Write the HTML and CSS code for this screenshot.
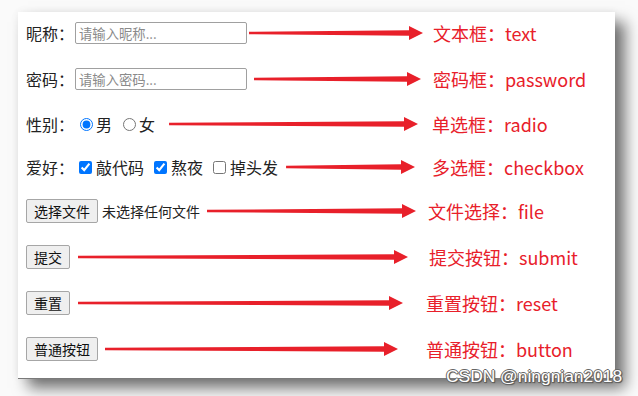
FILE: index.html
```html
<!DOCTYPE html>
<html lang="zh-CN">
<head>
  <meta charset="UTF-8">
  <meta name="viewport" content="width=device-width, initial-scale=1.0">
  <title>表单元素</title>
  <link rel="stylesheet" href="styles.css">
</head>
<body>
  <div class="card">
    <form class="demo-form" onsubmit="return false">
      <div class="row row-text">
        <div class="field">
          <span class="field-label">昵称：</span>
          <input type="text" class="text-input" placeholder="请输入昵称...">
        </div>
        <div class="arrow"><span class="shaft"></span><span class="head"></span></div>
        <div class="note">文本框：text</div>
      </div>

      <div class="row row-password">
        <div class="field">
          <span class="field-label">密码：</span>
          <input type="password" class="text-input" placeholder="请输入密码...">
        </div>
        <div class="arrow"><span class="shaft"></span><span class="head"></span></div>
        <div class="note">密码框：password</div>
      </div>

      <div class="row row-radio">
        <div class="field">
          <span class="field-label">性别：</span>
          <div class="choices">
            <label class="choice"><input type="radio" name="sex" value="male" checked>男</label>
            <label class="choice"><input type="radio" name="sex" value="female">女</label>
          </div>
        </div>
        <div class="arrow"><span class="shaft"></span><span class="head"></span></div>
        <div class="note">单选框：radio</div>
      </div>

      <div class="row row-checkbox">
        <div class="field">
          <span class="field-label">爱好：</span>
          <div class="choices">
            <label class="choice"><input type="checkbox" name="hobby" checked>敲代码</label>
            <label class="choice"><input type="checkbox" name="hobby" checked>熬夜</label>
            <label class="choice"><input type="checkbox" name="hobby">掉头发</label>
          </div>
        </div>
        <div class="arrow"><span class="shaft"></span><span class="head"></span></div>
        <div class="note">多选框：checkbox</div>
      </div>

      <div class="row row-file">
        <div class="field">
          <button type="button" class="btn">选择文件</button>
          <span class="file-status">未选择任何文件</span>
        </div>
        <div class="arrow"><span class="shaft"></span><span class="head"></span></div>
        <div class="note">文件选择：file</div>
      </div>

      <div class="row row-submit">
        <div class="field">
          <input type="submit" class="btn" value="提交">
        </div>
        <div class="arrow"><span class="shaft"></span><span class="head"></span></div>
        <div class="note">提交按钮：submit</div>
      </div>

      <div class="row row-reset">
        <div class="field">
          <input type="reset" class="btn" value="重置">
        </div>
        <div class="arrow"><span class="shaft"></span><span class="head"></span></div>
        <div class="note">重置按钮：reset</div>
      </div>

      <div class="row row-button">
        <div class="field">
          <input type="button" class="btn" value="普通按钮">
        </div>
        <div class="arrow"><span class="shaft"></span><span class="head"></span></div>
        <div class="note">普通按钮：button</div>
      </div>
    </form>
  </div>

  <div class="watermark">CSDN @ningnian2018</div>
</body>
</html>
```

FILE: styles.css
```css
body {
  margin: 0;
  width: 638px;
  height: 396px;
  overflow: hidden;
  background: #fafafa;
  font-family: "Noto Sans CJK SC", "Noto Sans", sans-serif;
  color: #222;
}

.card {
  margin: 12px 0 0 18px;
  width: 597px;
  height: 366px;
  box-sizing: border-box;
  padding: 1px 0 9px 8px;
  background: #fff;
  box-shadow: 0 1px 0 #7a7a7a, 10px 10px 14px rgba(0, 0, 0, 0.55), 0 0 8px rgba(0, 0, 0, 0.06);
}

.demo-form {
  display: flex;
  flex-direction: column;
  gap: 6px;
}

/* each row: control, arrow, red note */
.row {
  display: flex;
  align-items: center;
  height: 40px;
  --lead: 8px;
  --tail: 10px;
  --indent: 0px;
}

.row-text { --lead: 2px; --tail: 3px; --indent: 7px; }
.row-password { --lead: 7px; --tail: 5px; --indent: 7px; }
.row-radio { --lead: 14px; --tail: 8px; --indent: 6px; margin-top: -1px; }
.row-checkbox { --lead: 8px; --tail: 11px; --indent: 6px; margin-top: -3px; }
.row-file { --lead: 7px; --tail: 10px; --indent: 2px; margin-top: -2px; }
.row-submit { --lead: 8px; --tail: 18px; --indent: 3px; }
.row-reset { --lead: 8px; --tail: 23px; --indent: 0px; }
.row-button { --lead: 7px; --tail: 28px; --indent: 0px; }

.field {
  display: flex;
  align-items: center;
  font-size: 16px;
}

.field-label {
  white-space: nowrap;
}

.text-input {
  width: 172px;
  height: 22px;
  box-sizing: border-box;
  margin: 0 0 0 1px;
  padding: 0 3px;
  border: 1px solid #a0a0a0;
  border-radius: 2px;
  font-family: inherit;
  font-size: 13.33px;
  color: #222;
  outline: none;
}

.text-input::placeholder {
  color: #8a8a8a;
}

.choices {
  display: flex;
  align-items: center;
  gap: 10px;
  margin-left: 5px;
}

.row-radio .choices {
  gap: 11px;
  margin-left: 6px;
}

.choice {
  display: inline-flex;
  align-items: center;
  white-space: nowrap;
}

.choice input {
  width: 13px;
  height: 13px;
  margin: 0 4px 0 0;
}

.row-radio .choice input {
  margin: 0 3px 0 0;
}

.btn {
  height: 24px;
  box-sizing: border-box;
  margin: 0;
  padding: 0 7px;
  background: #efefef;
  border: 1px solid #a6a6a6;
  border-radius: 2px;
  font-family: inherit;
  font-size: 14px;
  line-height: 22px;
  color: #111;
}

.file-status {
  margin-left: 4px;
  font-size: 14px;
  white-space: nowrap;
}

.arrow {
  flex: 1;
  display: flex;
  align-items: center;
  height: 14px;
  margin: 0 var(--tail) 0 var(--lead);
}

.shaft {
  flex: 1;
  height: 6px;
  background: #e8202a;
  clip-path: polygon(0 30%, 100% 5%, 100% 95%, 0 70%);
}

.head {
  width: 0;
  height: 0;
  border-left: 14px solid #e8202a;
  border-top: 7px solid transparent;
  border-bottom: 7px solid transparent;
}

.note {
  width: 189px;
  box-sizing: border-box;
  padding-left: var(--indent);
  font-size: 18px;
  color: #e8202a;
  white-space: nowrap;
}

.watermark {
  position: absolute;
  left: 446px;
  top: 366px;
  font-family: "Liberation Sans", Arial, sans-serif;
  font-size: 17.4px;
  line-height: 20px;
  color: #fff;
  text-shadow: 1px 0 0 #666, -1px 0 0 #666, 0 1px 0 #666, 0 -1px 0 #666, 1px 1px 1px #444;
}
```
